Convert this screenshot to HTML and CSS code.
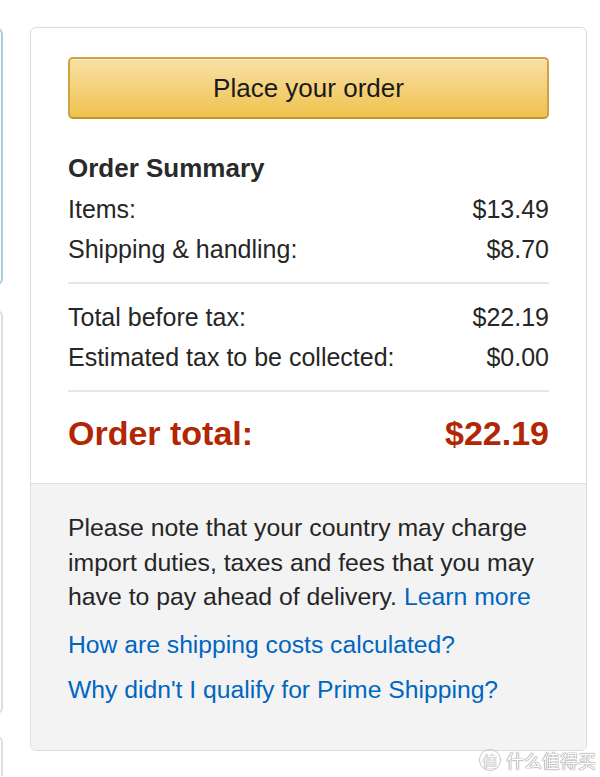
FILE: index.html
```html
<!DOCTYPE html>
<html lang="en">
<head>
<meta charset="utf-8">
<title>Order Summary</title>
<link rel="stylesheet" href="styles.css">
</head>
<body>
<div class="page">
  <div class="side">
    <div class="sbox sbox-blue"></div>
    <div class="sbox sbox-gray sbox-mid"></div>
    <div class="sbox sbox-gray sbox-last"></div>
  </div>
  <div class="card">
    <div class="card-main">
      <button class="place-btn" type="button">Place your order</button>
      <h3 class="summary-title">Order Summary</h3>
      <div class="row"><span>Items:</span><span>$13.49</span></div>
      <div class="row"><span>Shipping &amp; handling:</span><span>$8.70</span></div>
      <hr class="divider">
      <div class="row"><span>Total before tax:</span><span>$22.19</span></div>
      <div class="row"><span>Estimated tax to be collected:</span><span>$0.00</span></div>
      <hr class="divider">
      <div class="row total"><span>Order total:</span><span>$22.19</span></div>
    </div>
    <div class="card-foot">
      <p class="note">Please note that your country may charge import duties, taxes and fees that you may have to pay ahead of delivery. <a href="#">Learn more</a></p>
      <a class="foot-link" href="#">How are shipping costs calculated?</a>
      <a class="foot-link" href="#">Why didn't I qualify for Prime Shipping?</a>
    </div>
  </div>
</div>
<div class="watermark"><span class="wm-circle">值</span><span class="wm-text">什么值得买</span></div>
</body>
</html>
```
FILE: styles.css
```css
html, body {
  margin: 0;
  padding: 0;
  background: #ffffff;
}
body {
  width: 600px;
  height: 777px;
  overflow: hidden;
  position: relative;
  font-family: "Liberation Sans", Arial, sans-serif;
  color: #222;
}
.page {
  display: flex;
  align-items: flex-start;
  padding-top: 27px;
}
.side {
  width: 3px;
  flex: 0 0 3px;
  display: flex;
  flex-direction: column;
  margin-top: 1px;
}
.sbox {
  width: 200px;
  margin-left: -197px;
  box-sizing: border-box;
  border-radius: 6px;
  background: #fff;
}
.sbox-blue {
  height: 257px;
  border: 2px solid #a9cfdc;
}
.sbox-gray {
  border: 2px solid #dedede;
}
.sbox-mid {
  margin-top: 25px;
  height: 404px;
}
.sbox-last {
  margin-top: 22px;
  height: 40px;
  border-bottom: 0;
  border-radius: 6px 6px 0 0;
}
.card {
  margin-left: 27px;
  width: 557px;
  box-sizing: border-box;
  border: 1px solid #dcdcdc;
  border-radius: 6px;
  overflow: hidden;
  background: #fff;
}
.card-main {
  padding: 29px 37px 28px;
}
.place-btn {
  display: block;
  width: 100%;
  height: 62px;
  margin: 0;
  padding: 0;
  border: 2px solid #cfa33f;
  border-bottom-color: #bf9231;
  border-radius: 5px;
  background: linear-gradient(to bottom, #f8e0a6, #f0c24e);
  box-shadow: inset 0 1px 0 rgba(255, 255, 255, 0.5);
  font-family: "Liberation Sans", Arial, sans-serif;
  font-size: 26px;
  color: #1a1a1a;
  cursor: pointer;
}
.summary-title {
  margin: 33px 0 5px;
  font-size: 26px;
  line-height: 32px;
  font-weight: bold;
  color: #2a2a2a;
}
.row {
  display: flex;
  justify-content: space-between;
  font-size: 25px;
  line-height: 40px;
  color: #262626;
}
.divider {
  margin: 13px 0;
  border: 0;
  height: 2px;
  background: #e7e7e7;
}
.row.total {
  margin-top: 19px;
  font-size: 34px;
  line-height: 44px;
  font-weight: bold;
  color: #b12704;
}
.card-foot {
  background: #f3f3f3;
  border-top: 1px solid #dddddd;
  padding: 27px 37px 43px;
}
.note {
  margin: 0;
  font-size: 24.8px;
  line-height: 34.5px;
  color: #262626;
}
.note a,
.foot-link {
  color: #0066c0;
  text-decoration: none;
}
.foot-link {
  display: block;
  font-size: 24.7px;
  line-height: 34.5px;
  margin-top: 13px;
}
.foot-link + .foot-link {
  margin-top: 10.5px;
}
.watermark {
  position: absolute;
  right: 4px;
  bottom: 6px;
  display: flex;
  align-items: center;
  gap: 5px;
  font-family: "Noto Sans CJK SC", sans-serif;
  color: #ffffff;
}
.wm-circle {
  width: 20px;
  height: 20px;
  border: 1.5px solid #c8c8c8;
  border-radius: 50%;
  display: flex;
  align-items: center;
  justify-content: center;
  font-size: 15px;
  line-height: 1;
  text-shadow: 0 0 1px #888, 0 0 1px #888;
}
.wm-text {
  font-size: 18px;
  line-height: 22px;
  text-shadow: 0 0 1px #888, 0 0 1px #888, 0 0 1px #999;
}
```
